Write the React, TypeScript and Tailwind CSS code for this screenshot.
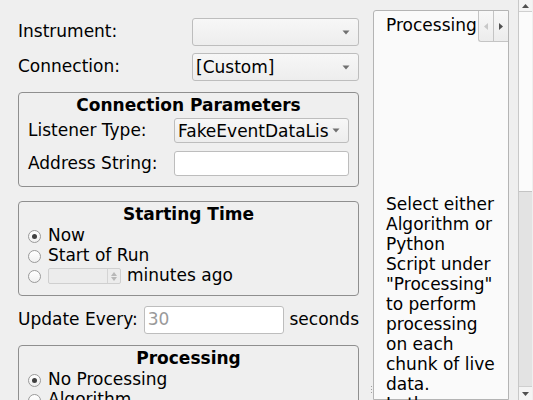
import React from "react";

const font = { fontFamily: "'DejaVu Sans', 'Liberation Sans', sans-serif" };

function Caret({ className = "" }: { className?: string }) {
  return (
    <svg width="8" height="5" viewBox="0 0 8 5" className={className}>
      <path d="M0.5 0.5 L7.5 0.5 L4 4.5 Z" fill="#707070" />
    </svg>
  );
}

function Combo({ value, className }: { value?: string; className: string }) {
  return (
    <div
      className={`flex items-center justify-between rounded-[3px] border border-[#bdbdbd] bg-gradient-to-b from-[#f7f7f7] to-[#ededed] pl-[3px] pr-[8px] ${className}`}
    >
      <span className="whitespace-nowrap leading-[20px]">{value}</span>
      <Caret />
    </div>
  );
}

function Field({ className, children }: { className: string; children?: React.ReactNode }) {
  return (
    <div className={`flex items-center rounded-[3px] border border-[#bdbdbd] bg-white pl-[3px] ${className}`}>
      {children}
    </div>
  );
}

function Radio({ checked }: { checked?: boolean }) {
  return (
    <span className="flex h-[13px] w-[13px] shrink-0 items-center justify-center rounded-full border border-[#9a9a9a] bg-gradient-to-b from-white to-[#f0f0f0]">
      {checked ? <span className="h-[5px] w-[5px] rounded-full bg-[#404040]" /> : null}
    </span>
  );
}

function Group({ title, children, className = "" }: { title: string; children: React.ReactNode; className?: string }) {
  return (
    <div className={`shrink-0 rounded-[4px] border border-[#8f8f8f] px-[9px] pt-[2px] ${className}`}>
      <div className="text-center font-bold leading-[20px]">{title}</div>
      {children}
    </div>
  );
}

export default function App() {
  const help = [
    "Select either",
    "Algorithm or",
    "Python",
    "Script under",
    '"Processing"',
    "to perform",
    "processing",
    "on each",
    "chunk of live",
    "data.",
    "In the",
  ];

  return (
    <div style={font} className="flex h-[400px] w-[533px] overflow-hidden bg-[#efefef] text-[17px] text-black">
      <div className="flex w-[359px] shrink-0 flex-col pl-[18px] pt-[18px]">
        <div className="flex h-[28px] shrink-0 items-center justify-between">
          <span>Instrument:</span>
          <Combo className="h-[28px] w-[167px]" />
        </div>
        <div className="mt-[7px] flex h-[28px] shrink-0 items-center justify-between">
          <span>Connection:</span>
          <Combo value="[Custom]" className="h-[28px] w-[167px]" />
        </div>

        <Group title="Connection Parameters" className="mt-[11px] h-[95px]">
          <div className="mt-[3px] flex h-[25px] items-center">
            <span className="w-[146px]">Listener Type:</span>
            <Combo value="FakeEventDataLis" className="h-[25px] w-[175px]" />
          </div>
          <div className="mt-[8px] flex h-[25px] items-center">
            <span className="w-[146px]">Address String:</span>
            <Field className="h-[25px] w-[175px]" />
          </div>
        </Group>

        <Group title="Starting Time" className="mt-[14px] h-[95px]">
          <div className="mt-[2px] flex h-[20px] items-center gap-[7px]">
            <Radio checked />
            <span>Now</span>
          </div>
          <div className="flex h-[20px] items-center gap-[7px]">
            <Radio />
            <span>Start of Run</span>
          </div>
          <div className="flex h-[20px] items-center gap-[7px]">
            <Radio />
            <div className="flex h-[16px] w-[73px] items-stretch rounded-[2px] border border-[#cfcfcf] bg-[#ececec]">
              <div className="flex-1" />
              <div className="flex w-[13px] flex-col items-center justify-center gap-[1px] border-l border-[#d4d4d4]">
                <svg width="6" height="4" viewBox="0 0 6 4">
                  <path d="M0 4 L6 4 L3 0 Z" fill="#b8b8b8" />
                </svg>
                <svg width="6" height="4" viewBox="0 0 6 4">
                  <path d="M0 0 L6 0 L3 4 Z" fill="#b8b8b8" />
                </svg>
              </div>
            </div>
            <span className="-ml-[1px]">minutes ago</span>
          </div>
        </Group>

        <div className="mt-[10px] flex h-[28px] shrink-0 items-center">
          <span className="w-[126px]">Update Every:</span>
          <Field className="h-[28px] w-[140px]">
            <span className="text-[#9a9a9a]">30</span>
          </Field>
          <span className="ml-[6px]">seconds</span>
        </div>

        <Group title="Processing" className="mt-[11px] h-[120px]">
          <div className="mt-[2px] flex h-[20px] items-center gap-[7px]">
            <Radio checked />
            <span>No Processing</span>
          </div>
          <div className="flex h-[20px] items-center gap-[7px]">
            <Radio />
            <span>Algorithm</span>
          </div>
        </Group>
      </div>

      <div className="relative ml-[14px] mt-[10px] flex w-[136px] shrink-0 flex-col rounded-tl-[3px] border border-[#b4b4b4] bg-[#fafafa]">
        <div className="flex h-[30px] shrink-0 items-start justify-between">
          <span className="whitespace-nowrap pl-[12px] pt-[4px] leading-[20px]">Processing</span>
          <div className="flex">
            <div className="flex h-[31px] w-[15px] items-center justify-center rounded-bl-[3px] border-b border-l border-[#c4c4c4] bg-gradient-to-b from-[#f8f8f8] to-[#ececec]">
              <svg width="4" height="7" viewBox="0 0 4 7">
                <path d="M4 0 L4 7 L0 3.5 Z" fill="#c8c8c8" />
              </svg>
            </div>
            <div className="flex h-[31px] w-[15px] items-center justify-center border-b border-l border-[#c4c4c4] bg-gradient-to-b from-[#f8f8f8] to-[#ececec]">
              <svg width="4" height="7" viewBox="0 0 4 7">
                <path d="M0 0 L0 7 L4 3.5 Z" fill="#505050" />
              </svg>
            </div>
          </div>
        </div>
        <div className="shrink-0 pl-[12px] pt-[153px] leading-[20px]">
          {help.map((l) => (
            <div key={l} className="whitespace-nowrap">
              {l}
            </div>
          ))}
        </div>
        <div className="absolute -left-[3px] top-[375px] flex flex-col gap-[2px]">
          <span className="h-[1px] w-[1px] bg-[#a0a0a0]" />
          <span className="h-[1px] w-[1px] bg-[#a0a0a0]" />
          <span className="h-[1px] w-[1px] bg-[#a0a0a0]" />
        </div>
      </div>

      <div className="ml-[9px] flex w-[14px] shrink-0 flex-col border-l border-[#c8c8c8] bg-[#e3e3e3]">
        <div className="flex h-[12px] shrink-0 items-center justify-center border-b border-[#cfcfcf] bg-[#f4f4f4]">
          <svg width="7" height="4" viewBox="0 0 7 4">
            <path d="M0 4 L7 4 L3.5 0 Z" fill="#505050" />
          </svg>
        </div>
        <div className="h-[180px] shrink-0 border-b border-[#c4c4c4] bg-[#fbfbfb]" />
        <div className="flex-1" />
        <div className="flex h-[14px] shrink-0 items-center justify-center border-t border-[#cfcfcf] bg-[#f4f4f4]">
          <svg width="7" height="4" viewBox="0 0 7 4">
            <path d="M0 0 L7 0 L3.5 4 Z" fill="#505050" />
          </svg>
        </div>
      </div>
    </div>
  );
}
